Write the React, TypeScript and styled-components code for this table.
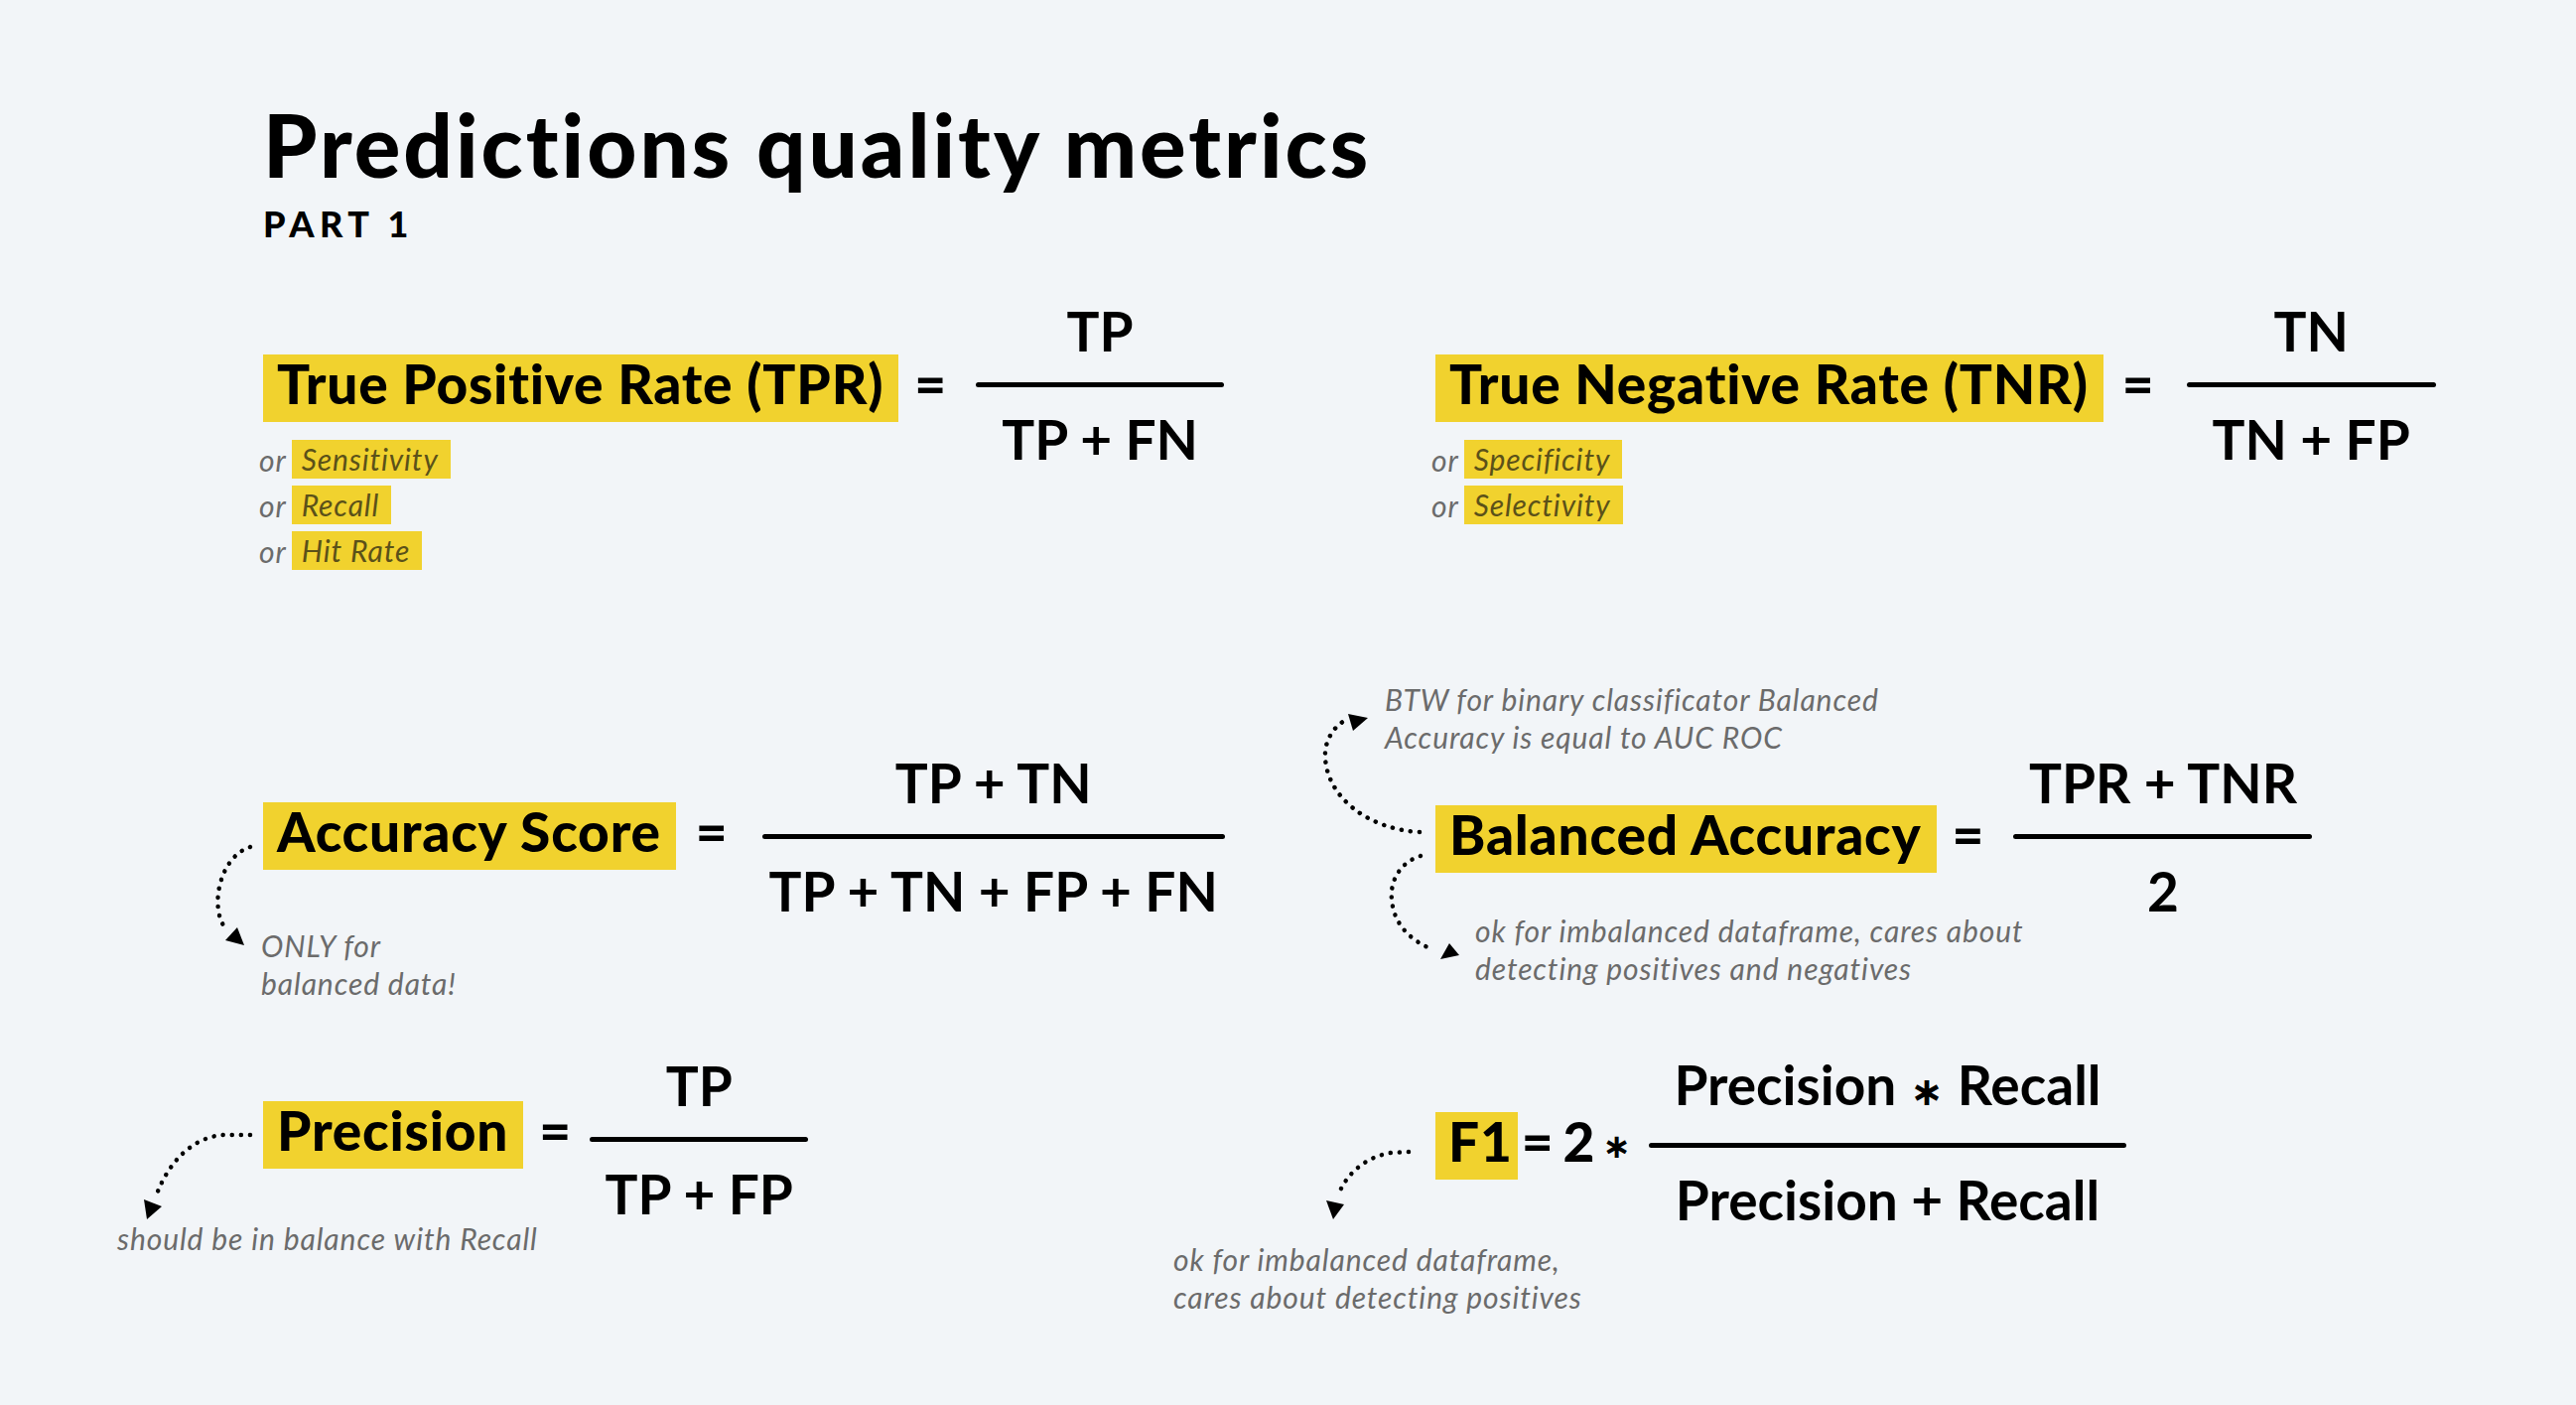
import styled, { createGlobalStyle } from 'styled-components';

const GlobalStyle = createGlobalStyle`
  html, body {
    margin: 0;
    padding: 0;
    background: #f2f5f8;
  }
  body {
    font-family: Lato, 'Liberation Sans', sans-serif;
    color: #000;
  }
`;

const Page = styled.div`
  min-height: 100vh;
  box-sizing: border-box;
  padding: 103px 0 0 265px;
  background: #f2f5f8;
`;

const Title = styled.h1`
  margin: 0;
  font-size: 87px;
  line-height: 86px;
  font-weight: 900;
  letter-spacing: 3px;
`;

const Subtitle = styled.div`
  margin-top: 18px;
  font-size: 36px;
  line-height: 36px;
  font-weight: 900;
  letter-spacing: 5.5px;
`;

const Board = styled.div`
  margin-top: 114px;
  display: grid;
  grid-template-columns: 1181px 1fr;
  grid-template-rows: 451px 301px auto;
  align-items: start;
`;

const Cell = styled.div<{ $top?: number }>`
  display: flex;
  flex-direction: column;
  align-items: flex-start;
  margin-top: ${(p) => p.$top ?? 0}px;
`;

const FormulaRow = styled.div`
  position: relative;
  display: flex;
  align-items: center;
`;

const Label = styled.div<{ $tight?: boolean }>`
  background: #f1d22e;
  font-size: 55px;
  line-height: 58px;
  font-weight: 900;
  letter-spacing: 0.8px;
  padding: ${(p) => (p.$tight ? '0 5px 10px 13px' : '0 15px 10px 14px')};
  white-space: nowrap;
`;

const Operator = styled.span<{ $before?: number; $after?: number }>`
  font-size: 55px;
  line-height: 58px;
  padding-bottom: 10px;
  font-weight: 900;
  margin: 0 ${(p) => p.$after ?? 30}px 0 ${(p) => p.$before ?? 16}px;
`;

const Star = styled.span<{ $size?: number; $before?: number; $after?: number }>`
  font-family: 'DejaVu Sans', sans-serif;
  font-weight: 700;
  font-size: ${(p) => p.$size ?? 40}px;
  margin: 0 ${(p) => p.$after ?? 14}px 0 ${(p) => p.$before ?? 14}px;
`;

const Fraction = styled.div<{ $width: number; $lift?: number }>`
  display: flex;
  flex-direction: column;
  align-items: center;
  gap: 19px;
  width: ${(p) => p.$width}px;
  margin: ${(p) => -(54 + (p.$lift ?? 0))}px 0 ${(p) => -(54 - (p.$lift ?? 0))}px;
`;

const Term = styled.div`
  font-size: 55px;
  line-height: 66px;
  font-weight: 700;
  white-space: nowrap;
`;

const Bar = styled.div`
  width: 100%;
  height: 5px;
  border-radius: 3px;
  background: #000;
`;

const Synonyms = styled.div`
  margin-top: 18px;
  display: flex;
  flex-direction: column;
  gap: 7px;
`;

const SynRow = styled.div`
  display: flex;
  align-items: center;
  gap: 5px;
  margin-left: -4px;
  font-style: italic;
  font-size: 30px;
  letter-spacing: 0.9px;
`;

const Or = styled.span`
  color: #6b6b6b;
`;

const Tag = styled.span`
  background: #f1d22e;
  color: #5b5119;
  height: 39px;
  line-height: 39px;
  padding: 0 12px 0 10px;
`;

const Note = styled.div<{ $top?: number; $left?: number; $bottom?: number }>`
  margin: ${(p) => p.$top ?? 0}px 0 ${(p) => p.$bottom ?? 0}px ${(p) => p.$left ?? 0}px;
  font-style: italic;
  font-size: 30px;
  line-height: 38px;
  letter-spacing: 0.9px;
  color: #6b6b6b;
  white-space: nowrap;
`;

const ArrowLayer = styled.svg`
  position: absolute;
  left: 0;
  top: 0;
  width: 1px;
  height: 1px;
  overflow: visible;
  pointer-events: none;
`;

const Dotted = styled.path`
  fill: none;
  stroke: #000;
  stroke-width: 4.5;
  stroke-linecap: round;
  stroke-dasharray: 0.1 9;
`;

const Arrow = ({ d, head }: { d: string; head: string }) => (
  <ArrowLayer>
    <Dotted d={d} />
    <polygon points={head} fill="#000" />
  </ArrowLayer>
);

const Frac = ({
  top,
  bottom,
  width,
  lift,
}: {
  top: React.ReactNode;
  bottom: React.ReactNode;
  width: number;
  lift?: number;
}) => (
  <Fraction $width={width} $lift={lift}>
    <Term>{top}</Term>
    <Bar />
    <Term>{bottom}</Term>
  </Fraction>
);

const App = () => {
  return (
    <Page>
      <GlobalStyle />
      <Title>Predictions quality metrics</Title>
      <Subtitle>PART 1</Subtitle>
      <Board>
        <Cell>
          <FormulaRow>
            <Label>True Positive Rate (TPR)</Label>
            <Operator>=</Operator>
            <Frac top="TP" bottom="TP + FN" width={250} lift={4} />
          </FormulaRow>
          <Synonyms>
            <SynRow>
              <Or>or</Or>
              <Tag>Sensitivity</Tag>
            </SynRow>
            <SynRow>
              <Or>or</Or>
              <Tag>Recall</Tag>
            </SynRow>
            <SynRow>
              <Or>or</Or>
              <Tag>Hit Rate</Tag>
            </SynRow>
          </Synonyms>
        </Cell>

        <Cell>
          <FormulaRow>
            <Label>True Negative Rate (TNR)</Label>
            <Operator $before={19} $after={33}>=</Operator>
            <Frac top="TN" bottom="TN + FP" width={251} lift={4} />
          </FormulaRow>
          <Synonyms>
            <SynRow>
              <Or>or</Or>
              <Tag>Specificity</Tag>
            </SynRow>
            <SynRow>
              <Or>or</Or>
              <Tag>Selectivity</Tag>
            </SynRow>
          </Synonyms>
        </Cell>

        <Cell>
          <FormulaRow>
            <Arrow
              d="M -13 45 C -45 55 -55 110 -36 129"
              head="-26,126 -38,139 -19,144"
            />
            <Label>Accuracy Score</Label>
            <Operator $before={20} $after={35}>=</Operator>
            <Frac top="TP + TN" bottom="TP + TN + FP + FN" width={466} />
          </FormulaRow>
          <Note $top={57} $left={-2}>
            ONLY for
            <br />
            balanced data!
          </Note>
        </Cell>

        <Cell $top={-123}>
          <Note $left={-51} $bottom={50}>
            BTW for binary classificator Balanced
            <br />
            Accuracy is equal to AUC ROC
          </Note>
          <FormulaRow>
            <Arrow
              d="M -16 27 C -70 24 -110 -10 -111 -49 C -112 -65 -102 -80 -90 -86"
              head="-88,-92 -68,-88 -83,-75"
            />
            <Arrow
              d="M -15 51 C -38 58 -46 80 -44 95 C -42 120 -25 135 -8 143"
              head="14,139 24,151 5,155"
            />
            <Label>Balanced Accuracy</Label>
            <Operator>=</Operator>
            <Frac top="TPR + TNR" bottom="2" width={301} lift={3} />
          </FormulaRow>
          <Note $top={39} $left={40}>
            ok for imbalanced dataframe, cares about
            <br />
            detecting positives and negatives
          </Note>
        </Cell>

        <Cell>
          <FormulaRow>
            <Arrow
              d="M -13 34 L -40 34 C -70 36 -95 60 -108 96"
              head="-120,99 -102,106 -117,119"
            />
            <Label>Precision</Label>
            <Operator $after={19}>=</Operator>
            <Frac top="TP" bottom="TP + FP" width={220} lift={-4} />
          </FormulaRow>
          <Note $top={51} $left={-147}>
            should be in balance with Recall
          </Note>
        </Cell>

        <Cell $top={8}>
          <FormulaRow>
            <Arrow
              d="M -27 43 L -45 44 C -70 48 -90 65 -98 87"
              head="-110,92 -92,96 -103,111"
            />
            <Label $tight>F1</Label>
            <Operator $before={4} $after={10}>=</Operator>
            <Operator $before={0} $after={0}>2</Operator>
            <Star $size={34} $before={8} $after={18}>∗</Star>
            <Frac
              top={
                <>
                  Precision<Star>∗</Star>Recall
                </>
              }
              bottom="Precision + Recall"
              width={481}
              lift={4}
            />
          </FormulaRow>
          <Note $top={58} $left={-264}>
            ok for imbalanced dataframe,
            <br />
            cares about detecting positives
          </Note>
        </Cell>
      </Board>
    </Page>
  );
};

export default App;
